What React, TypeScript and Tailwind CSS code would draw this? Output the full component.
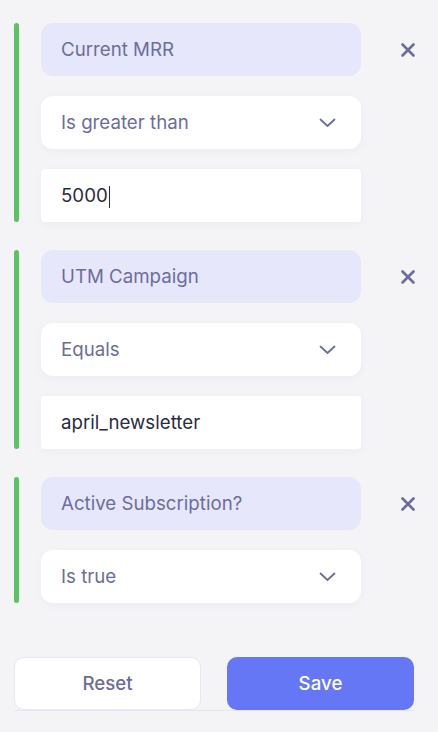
import { X } from 'lucide-react'

type Rule = { field: string; op: string; value?: string; caret?: boolean }

const rules: Rule[] = [
  { field: 'Current MRR', op: 'Is greater than', value: '5000', caret: true },
  { field: 'UTM Campaign', op: 'Equals', value: 'april_newsletter' },
  { field: 'Active Subscription?', op: 'Is true' },
]

function Chevron() {
  return (
    <svg width="17" height="10" viewBox="0 0 17 10" fill="none" className="text-[#6c6d9c]">
      <polyline points="1.5,1.5 8.5,8 15.5,1.5" stroke="currentColor" strokeWidth="1.8" strokeLinecap="round" strokeLinejoin="round" />
    </svg>
  )
}

function RuleGroup({ rule }: { rule: Rule }) {
  return (
    <div className="flex items-stretch">
      <div className="w-[5px] rounded-full bg-[#5ac462]" />
      <div className="ml-[22px] flex w-[320px] flex-col gap-[20px]">
        <div className="flex h-[53px] items-center rounded-[12px] bg-[#e6e7fb] px-[20px] pt-[2px] text-[18.7px] text-[#6c6d9c]">
          {rule.field}
        </div>
        <div className="flex h-[53px] items-center justify-between rounded-[12px] bg-white pl-[20px] pr-[25px] text-[18.7px] text-[#6c6d9c] shadow-[0_2px_10px_rgba(60,60,110,0.04)]">
          <span className="pt-[2px]">{rule.op}</span>
          <Chevron />
        </div>
        {rule.value !== undefined && (
          <div className="flex h-[53px] items-center rounded-[4px] bg-white px-[20px] pt-[2px] text-[18.7px] text-[#2b2b40] shadow-[0_2px_10px_rgba(60,60,110,0.04)]">
            <span>{rule.value}</span>
            {rule.caret && <span className="ml-[1px] h-[22px] w-[1.5px] bg-[#2b2b40]" />}
          </div>
        )}
      </div>
      <div className="ml-[36px] flex h-[53px] items-center">
        <X size={22} strokeWidth={2.9} className="text-[#6c6d9c]" />
      </div>
    </div>
  )
}

export default function App() {
  return (
    <div
      className="min-h-[732px] w-[438px] bg-[#f4f4f7] pl-[14px] pt-[23px]"
      style={{ fontFamily: 'Inter, "Noto Sans", sans-serif' }}
    >
      <div className="flex flex-col gap-[28px]">
        {rules.map((r) => (
          <RuleGroup key={r.field} rule={r} />
        ))}
      </div>
      <div className="mt-[54px] w-[400px]">
        <div className="flex gap-[26px]">
          <button className="h-[53px] w-[187px] rounded-[10px] border border-[#e6e6f7] bg-white pt-[2px] text-[18.7px] font-medium text-[#6c6d9c]">
            Reset
          </button>
          <button className="h-[53px] w-[187px] rounded-[10px] bg-[#6677f6] pt-[2px] text-[18.7px] font-medium text-white">
            Save
          </button>
        </div>
        <div className="h-px bg-[#e6e6f2]" />
      </div>
    </div>
  )
}
